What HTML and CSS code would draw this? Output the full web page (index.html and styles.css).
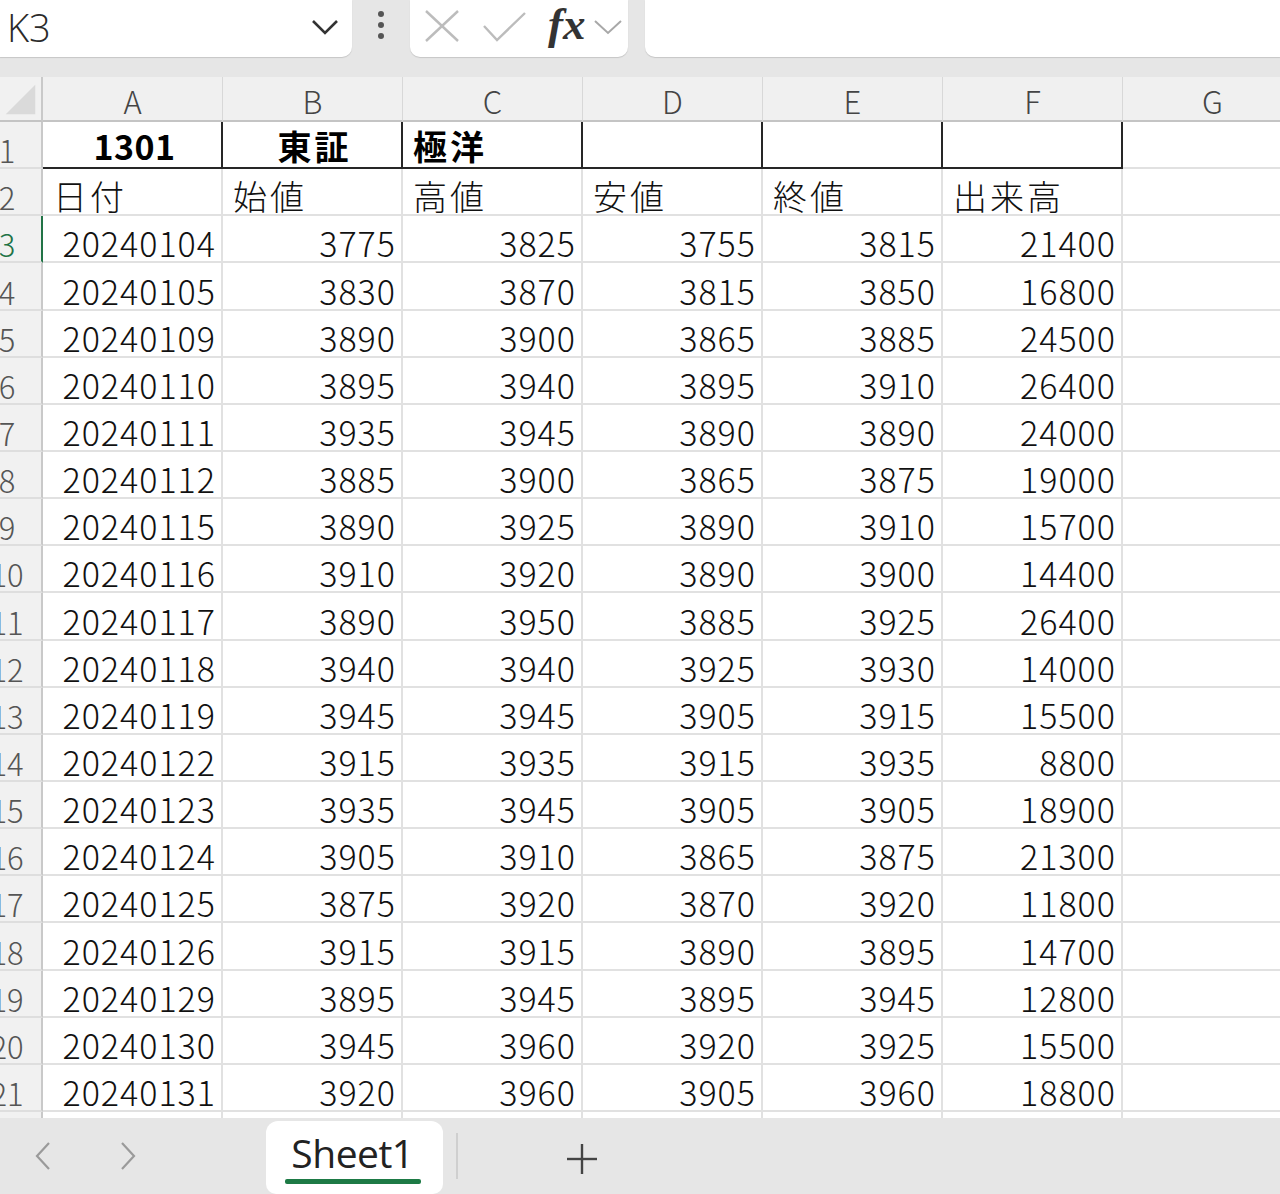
FILE: index.html
```html
<!DOCTYPE html>
<html lang="ja">
<head>
<meta charset="utf-8">
<title>Sheet1</title>
<link rel="stylesheet" href="styles.css">
</head>
<body>
<div class="app">
  <div class="top">
    <div class="namebox">
      <span class="name">K3</span>
      <svg class="chev" width="28" height="16" viewBox="0 0 28 16"><polyline points="2,2 14,14 26,2" fill="none" stroke="#333" stroke-width="2.6"/></svg>
    </div>
    <div class="dots"><span></span><span></span><span></span></div>
    <div class="fxbox">
      <svg class="xicon" width="34" height="32" viewBox="0 0 34 32"><line x1="1" y1="1" x2="33" y2="31" stroke="#bcbcbc" stroke-width="2.4"/><line x1="33" y1="1" x2="1" y2="31" stroke="#bcbcbc" stroke-width="2.4"/></svg>
      <svg class="ok" width="43" height="30" viewBox="0 0 43 30"><polyline points="1,14 14,28 42,1" fill="none" stroke="#bcbcbc" stroke-width="2.4"/></svg>
      <span class="fx">fx</span>
      <svg class="chev2" width="28" height="16" viewBox="0 0 28 16"><polyline points="1,2 14,14 27,2" fill="none" stroke="#a8a8a8" stroke-width="2"/></svg>
    </div>
    <div class="formula"></div>
  </div>

  <div class="sheet">
    <div class="row head">
      <div class="rh corner"><svg width="43" height="44" viewBox="0 0 43 44"><polygon points="37,8 37,39 6,39" fill="#dadada"/></svg></div>
      <div class="ch">A</div><div class="ch">B</div><div class="ch">C</div><div class="ch">D</div><div class="ch">E</div><div class="ch">F</div><div class="ch">G</div>
    </div>

    <div class="row r1">
      <div class="rh"><span>1</span></div>
      <div class="c b ctr">1301</div><div class="c b ctr k">東証</div><div class="c b k">極洋</div><div class="c b"></div><div class="c b"></div><div class="c b"></div><div class="c"></div>
    </div>
    <div class="row">
      <div class="rh"><span>2</span></div>
      <div class="c k">日付</div><div class="c k">始値</div><div class="c k">高値</div><div class="c k">安値</div><div class="c k">終値</div><div class="c k">出来高</div><div class="c"></div>
    </div>
    <div class="row">
      <div class="rh sel"><span>3</span></div>
      <div class="c n">20240104</div><div class="c n">3775</div><div class="c n">3825</div><div class="c n">3755</div><div class="c n">3815</div><div class="c n">21400</div><div class="c"></div>
    </div>
    <div class="row">
      <div class="rh"><span>4</span></div>
      <div class="c n">20240105</div><div class="c n">3830</div><div class="c n">3870</div><div class="c n">3815</div><div class="c n">3850</div><div class="c n">16800</div><div class="c"></div>
    </div>
    <div class="row">
      <div class="rh"><span>5</span></div>
      <div class="c n">20240109</div><div class="c n">3890</div><div class="c n">3900</div><div class="c n">3865</div><div class="c n">3885</div><div class="c n">24500</div><div class="c"></div>
    </div>
    <div class="row">
      <div class="rh"><span>6</span></div>
      <div class="c n">20240110</div><div class="c n">3895</div><div class="c n">3940</div><div class="c n">3895</div><div class="c n">3910</div><div class="c n">26400</div><div class="c"></div>
    </div>
    <div class="row">
      <div class="rh"><span>7</span></div>
      <div class="c n">20240111</div><div class="c n">3935</div><div class="c n">3945</div><div class="c n">3890</div><div class="c n">3890</div><div class="c n">24000</div><div class="c"></div>
    </div>
    <div class="row">
      <div class="rh"><span>8</span></div>
      <div class="c n">20240112</div><div class="c n">3885</div><div class="c n">3900</div><div class="c n">3865</div><div class="c n">3875</div><div class="c n">19000</div><div class="c"></div>
    </div>
    <div class="row">
      <div class="rh"><span>9</span></div>
      <div class="c n">20240115</div><div class="c n">3890</div><div class="c n">3925</div><div class="c n">3890</div><div class="c n">3910</div><div class="c n">15700</div><div class="c"></div>
    </div>
    <div class="row">
      <div class="rh"><span>10</span></div>
      <div class="c n">20240116</div><div class="c n">3910</div><div class="c n">3920</div><div class="c n">3890</div><div class="c n">3900</div><div class="c n">14400</div><div class="c"></div>
    </div>
    <div class="row">
      <div class="rh"><span>11</span></div>
      <div class="c n">20240117</div><div class="c n">3890</div><div class="c n">3950</div><div class="c n">3885</div><div class="c n">3925</div><div class="c n">26400</div><div class="c"></div>
    </div>
    <div class="row">
      <div class="rh"><span>12</span></div>
      <div class="c n">20240118</div><div class="c n">3940</div><div class="c n">3940</div><div class="c n">3925</div><div class="c n">3930</div><div class="c n">14000</div><div class="c"></div>
    </div>
    <div class="row">
      <div class="rh"><span>13</span></div>
      <div class="c n">20240119</div><div class="c n">3945</div><div class="c n">3945</div><div class="c n">3905</div><div class="c n">3915</div><div class="c n">15500</div><div class="c"></div>
    </div>
    <div class="row">
      <div class="rh"><span>14</span></div>
      <div class="c n">20240122</div><div class="c n">3915</div><div class="c n">3935</div><div class="c n">3915</div><div class="c n">3935</div><div class="c n">8800</div><div class="c"></div>
    </div>
    <div class="row">
      <div class="rh"><span>15</span></div>
      <div class="c n">20240123</div><div class="c n">3935</div><div class="c n">3945</div><div class="c n">3905</div><div class="c n">3905</div><div class="c n">18900</div><div class="c"></div>
    </div>
    <div class="row">
      <div class="rh"><span>16</span></div>
      <div class="c n">20240124</div><div class="c n">3905</div><div class="c n">3910</div><div class="c n">3865</div><div class="c n">3875</div><div class="c n">21300</div><div class="c"></div>
    </div>
    <div class="row">
      <div class="rh"><span>17</span></div>
      <div class="c n">20240125</div><div class="c n">3875</div><div class="c n">3920</div><div class="c n">3870</div><div class="c n">3920</div><div class="c n">11800</div><div class="c"></div>
    </div>
    <div class="row">
      <div class="rh"><span>18</span></div>
      <div class="c n">20240126</div><div class="c n">3915</div><div class="c n">3915</div><div class="c n">3890</div><div class="c n">3895</div><div class="c n">14700</div><div class="c"></div>
    </div>
    <div class="row">
      <div class="rh"><span>19</span></div>
      <div class="c n">20240129</div><div class="c n">3895</div><div class="c n">3945</div><div class="c n">3895</div><div class="c n">3945</div><div class="c n">12800</div><div class="c"></div>
    </div>
    <div class="row">
      <div class="rh"><span>20</span></div>
      <div class="c n">20240130</div><div class="c n">3945</div><div class="c n">3960</div><div class="c n">3920</div><div class="c n">3925</div><div class="c n">15500</div><div class="c"></div>
    </div>
    <div class="row">
      <div class="rh"><span>21</span></div>
      <div class="c n">20240131</div><div class="c n">3920</div><div class="c n">3960</div><div class="c n">3905</div><div class="c n">3960</div><div class="c n">18800</div><div class="c"></div>
    </div>
    <div class="row">
      <div class="rh"><span>22</span></div>
      <div class="c"></div><div class="c"></div><div class="c"></div><div class="c"></div><div class="c"></div><div class="c"></div><div class="c"></div>
    </div>
  </div>

  <div class="tabs">
    <svg class="nav prev" width="16" height="30" viewBox="0 0 16 30"><polyline points="14,2 2,15 14,28" fill="none" stroke="#9a9a9a" stroke-width="2.2"/></svg>
    <svg class="nav next" width="16" height="30" viewBox="0 0 16 30"><polyline points="2,2 14,15 2,28" fill="none" stroke="#9a9a9a" stroke-width="2.2"/></svg>
    <div class="tab"><span class="tabname">Sheet1</span><span class="uline"></span></div>
    <span class="sep"></span>
    <svg class="plus" width="32" height="32" viewBox="0 0 32 32"><line x1="16" y1="1" x2="16" y2="31" stroke="#444" stroke-width="2.4"/><line x1="1" y1="16" x2="31" y2="16" stroke="#444" stroke-width="2.4"/></svg>
  </div>
</div>
</body>
</html>
```

FILE: styles.css
```css
* { box-sizing: border-box; }
html, body { margin: 0; padding: 0; }
body {
  width: 1280px;
  height: 1194px;
  overflow: hidden;
  background: #e6e6e6;
  font-family: "Noto Sans CJK JP", "Noto Sans", sans-serif;
}
.app {
  display: flex;
  flex-direction: column;
  height: 1194px;
}

/* top formula bar */
.top {
  height: 77px;
  flex-shrink: 0;
  display: flex;
  align-items: flex-start;
  background: #e6e6e6;
}
.namebox {
  width: 352px;
  height: 57px;
  background: #fff;
  border-radius: 0 0 10px 0;
  box-shadow: 0 1px 1px rgba(0,0,0,0.14);
  display: flex;
  align-items: center;
  justify-content: space-between;
  padding: 0 13px 4px 7px;
}
.name {
  font-family: "Open Sans", "Noto Sans", sans-serif;
  font-size: 38px;
  font-weight: 300;
  color: #2a2a2a;
  line-height: 1;
}
.dots {
  width: 58px;
  height: 50px;
  display: flex;
  flex-direction: column;
  align-items: center;
  justify-content: center;
  gap: 5px;
}
.dots span {
  width: 6px;
  height: 6px;
  border-radius: 50%;
  background: #555;
}
.fxbox {
  width: 218px;
  height: 57px;
  background: #fff;
  border-radius: 0 0 10px 10px;
  box-shadow: 0 1px 1px rgba(0,0,0,0.14);
  display: flex;
  align-items: center;
  padding: 0 0 6px 15px;
}
.xicon { margin-right: 24px; }
.ok { margin-right: 22px; margin-top: 2px; }
.fx {
  font-family: "Liberation Serif", "DejaVu Serif", serif;
  font-style: italic;
  font-weight: 700;
  font-size: 45px;
  line-height: 1;
  color: #333;
  margin-right: 8px;
  margin-top: -2px;
}
.chev2 { margin-top: 2px; }
.formula {
  margin-left: 17px;
  flex: 1;
  height: 57px;
  background: #fff;
  border-radius: 0 0 0 10px;
  box-shadow: 0 1px 1px rgba(0,0,0,0.14);
}

/* sheet */
.sheet {
  flex: 1;
  overflow: hidden;
  background: #fff;
}
.row {
  display: flex;
  height: 47.15px;
}
.row.head { height: 45px; }
.rh {
  width: 43px;
  flex-shrink: 0;
  overflow: hidden;
  background: #f1f1f1;
  border-right: 2px solid #c9c9c9;
  border-bottom: 2px solid #dedede;
  display: flex;
  align-items: flex-end;
  padding-bottom: 2px;
  font-size: 31px;
  font-weight: 300;
  color: #555;
  line-height: 1;
}
.rh span {
  display: block;
  flex-shrink: 0;
  width: 72px;
  margin-left: -29px;
  text-align: center;
}
.rh.sel {
  color: #217346;
  border-right-color: #217346;
}
.rh.corner {
  padding: 0;
  border-bottom: 2px solid #c4c4c4;
}
.ch {
  width: 180px;
  flex-shrink: 0;
  background: #f0f0f0;
  border-right: 1px solid #d8d8d8;
  border-bottom: 2px solid #c4c4c4;
  display: flex;
  align-items: flex-end;
  justify-content: center;
  padding-bottom: 1px;
  font-size: 31px;
  font-weight: 300;
  color: #444;
  line-height: 1.2;
}
.c {
  width: 180px;
  flex-shrink: 0;
  border-right: 2px solid #e1e1e1;
  border-bottom: 2px solid #e1e1e1;
  display: flex;
  align-items: flex-end;
  padding: 0 5px 1px 10px;
  font-size: 34px;
  font-weight: 300;
  letter-spacing: 1px;
  color: #111;
  line-height: 1;
  white-space: nowrap;
}
.c.k { letter-spacing: 3px; }
.c.n { justify-content: flex-end; }
.c.ctr { justify-content: center; }
.c.b {
  border-right-color: #262626;
  border-bottom-color: #262626;
}
.r1 .c { font-weight: 700; color: #000; padding-bottom: 4px; letter-spacing: 0.5px; }
.r1 .c.k { letter-spacing: 3px; }

/* tabs */
.tabs {
  height: 76px;
  flex-shrink: 0;
  background: #e6e6e6;
  display: flex;
  align-items: center;
}
.nav.prev { margin-left: 35px; }
.nav.next { margin-left: 69px; }
.tab {
  margin-left: 130px;
  width: 177px;
  height: 73px;
  align-self: flex-end;
  background: #fff;
  border-radius: 12px 12px 10px 10px;
  display: flex;
  flex-direction: column;
  align-items: center;
  padding-top: 11px;
}
.tabname {
  font-family: "Open Sans", "Noto Sans", sans-serif;
  font-size: 39px;
  font-weight: 400;
  line-height: 1.1;
  color: #222;
  margin-left: -4px;
  letter-spacing: -0.5px;
}
.uline {
  margin-top: 4px;
  width: 136px;
  height: 5px;
  border-radius: 2px;
  background: #1d7a45;
  margin-left: -4px;
}
.sep {
  margin-left: 13px;
  width: 2px;
  height: 46px;
  background: #cfcfcf;
}
.plus { margin-left: 108px; margin-top: 6px; }
```
